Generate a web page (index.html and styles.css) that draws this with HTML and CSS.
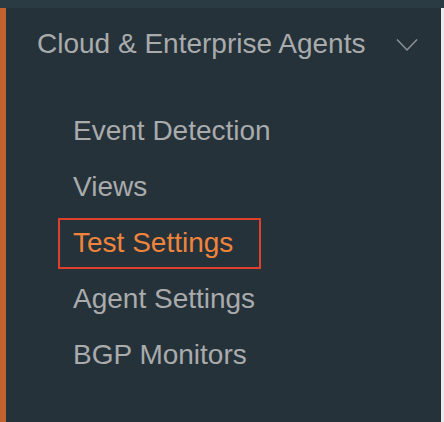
FILE: index.html
```html
<!DOCTYPE html>
<html>
<head>
<meta charset="utf-8">
<link rel="stylesheet" href="styles.css">
</head>
<body>
<div class="topbar"></div>
<div class="panel">
  <div class="section">
    <div class="heading">
      <span class="heading-text">Cloud &amp; Enterprise Agents</span>
      <svg class="chevron" width="22" height="14" viewBox="0 0 22 14"><path d="M1 1.5 L11 12 L21 1.5" fill="none" stroke="#8c9295" stroke-width="1.5"/></svg>
    </div>
    <ul class="items">
      <li class="item">Event Detection</li>
      <li class="item">Views</li>
      <li class="item active"><span class="box">Test Settings</span></li>
      <li class="item">Agent Settings</li>
      <li class="item">BGP Monitors</li>
    </ul>
  </div>
  <div class="edge"></div>
</div>
</body>
</html>
```
FILE: styles.css
```css
html, body {
  margin: 0;
  padding: 0;
  width: 444px;
  height: 422px;
  overflow: hidden;
  background: #25323a;
  font-family: "Liberation Sans", Arial, sans-serif;
}
.topbar {
  height: 8px;
  background: #2b3b43;
}
.panel {
  display: flex;
  height: 414px;
  background: #25323a;
  border-left: 6px solid #c2622f;
}
.section {
  flex: 1;
}
.edge {
  width: 3px;
  background: #e9ebec;
}
.heading {
  display: flex;
  align-items: center;
  justify-content: space-between;
  padding: 20px 23px 0 31px;
  height: 32px;
}
.heading-text {
  font-size: 28px;
  line-height: 32px;
  color: #a9abac;
}
.chevron {
  display: block;
  margin-top: 2px;
}
.items {
  list-style: none;
  margin: 55px 0 0 0;
  padding: 0 0 0 67px;
}
.item {
  font-size: 28px;
  line-height: 32px;
  color: #a9abac;
  height: 32px;
  margin-bottom: 24px;
}
.item.active {
  color: #f0843c;
}
.box {
  display: inline-block;
  margin: -9px 0 0 -15px;
  padding: 7px 26px 8px 13px;
  border: 2px solid #e0402b;
}
```
